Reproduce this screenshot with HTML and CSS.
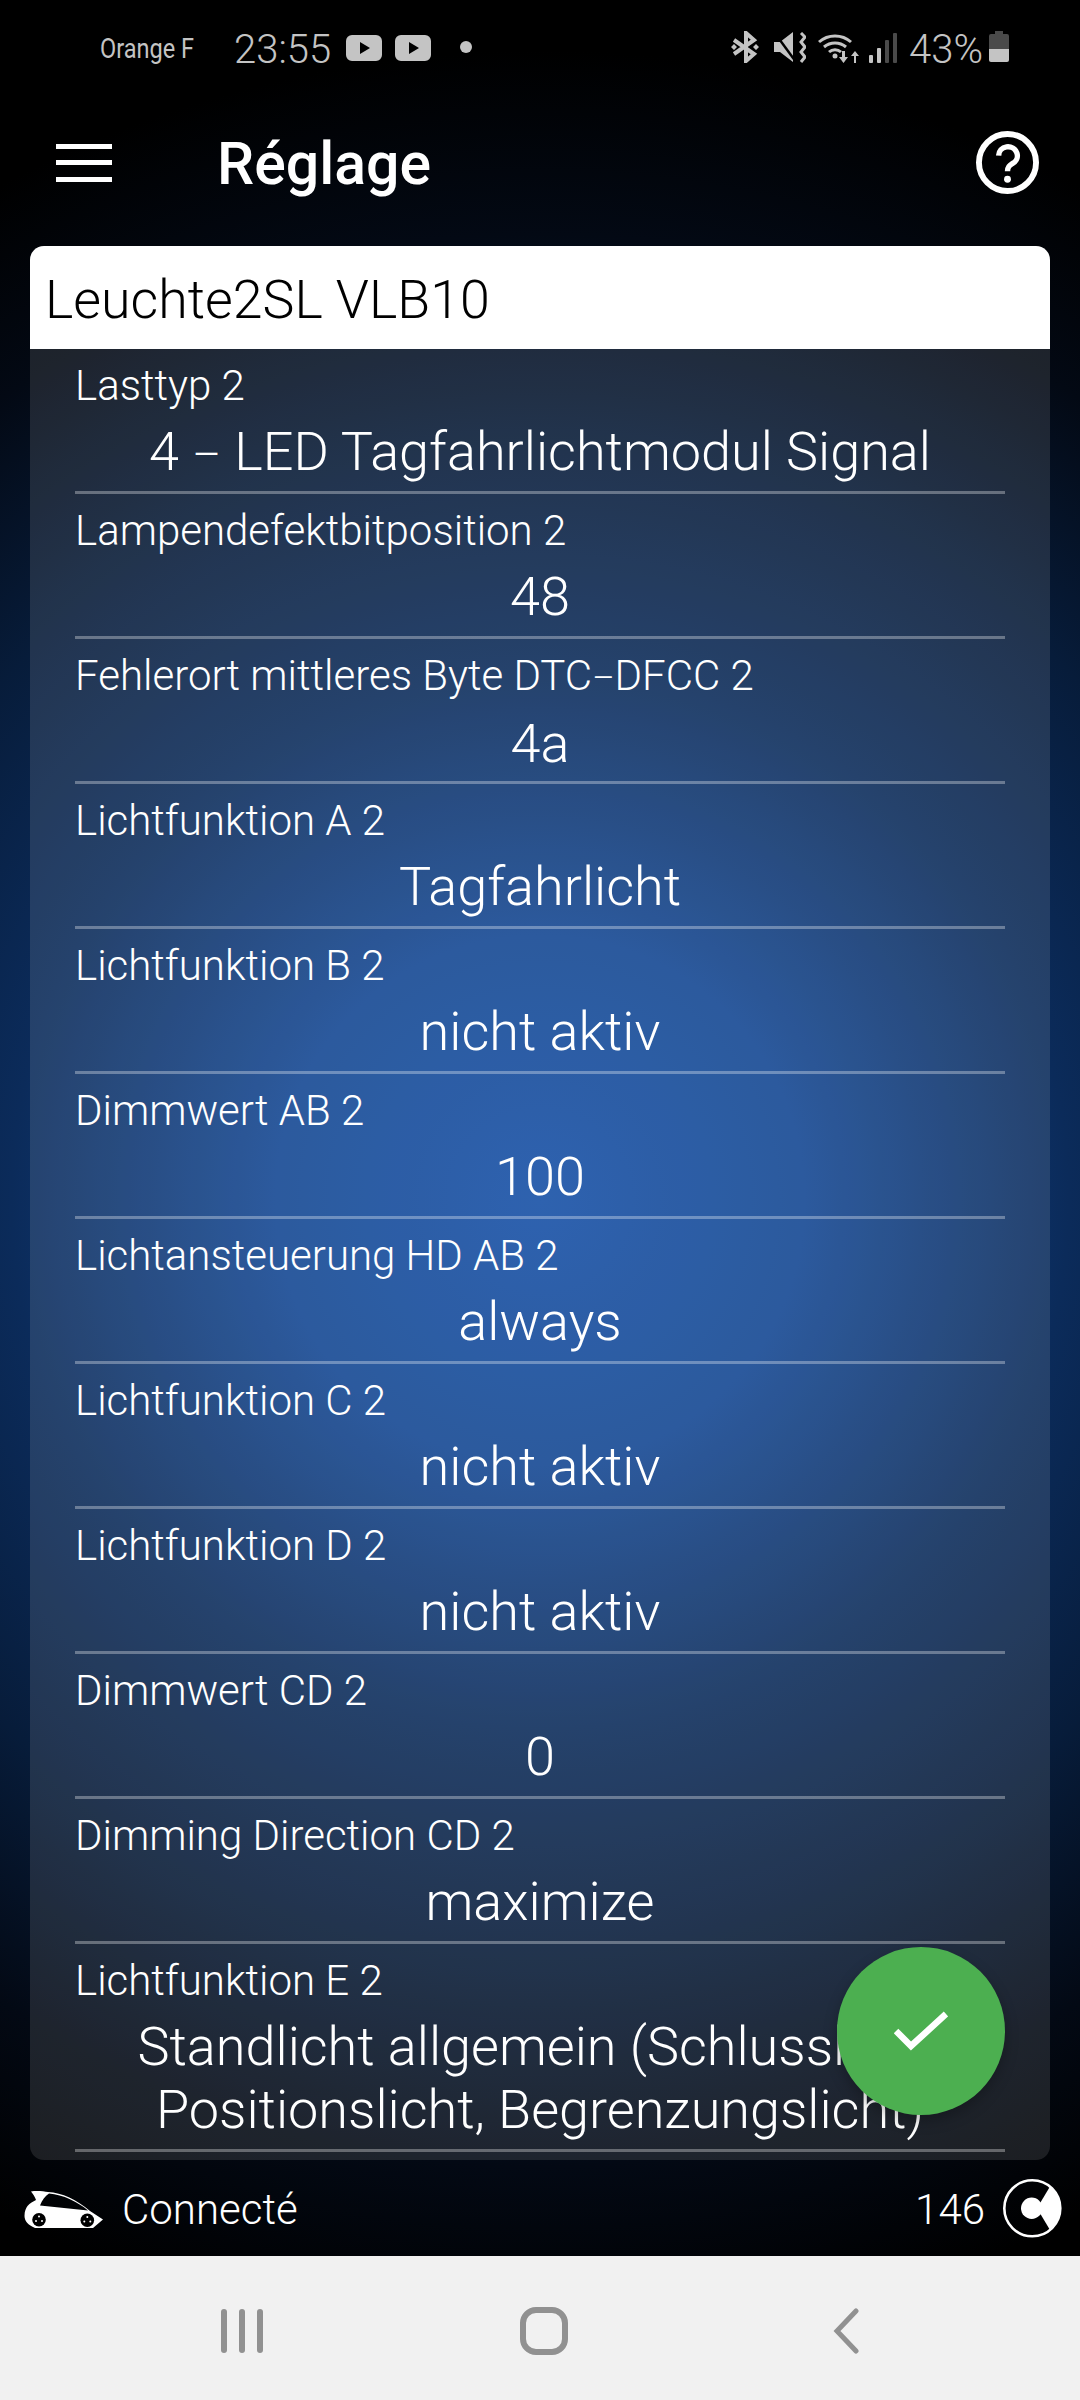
FILE: index.html
```html
<!DOCTYPE html>
<html lang="de">
<head>
<meta charset="utf-8">
<title>Réglage</title>
<link rel="stylesheet" href="styles.css">
</head>
<body>
<div class="screen">
  <div class="statusbar">
    <span class="carrier"><span class="carrier-text">Orange F</span></span>
    <span class="clock">23:55</span>
    <svg class="yt" viewBox="0 0 36 26"><path fill="#c4c4c4" fill-rule="evenodd" d="M6 0h24a6 6 0 0 1 6 6v14a6 6 0 0 1-6 6H6a6 6 0 0 1-6-6V6a6 6 0 0 1 6-6zM14 7v12l10-6z"/></svg>
    <svg class="yt" viewBox="0 0 36 26"><path fill="#c4c4c4" fill-rule="evenodd" d="M6 0h24a6 6 0 0 1 6 6v14a6 6 0 0 1-6 6H6a6 6 0 0 1-6-6V6a6 6 0 0 1 6-6zM14 7v12l10-6z"/></svg>
    <span class="dot"></span>
    <span class="spacer"></span>
    <svg class="ic-bt" viewBox="0 0 28 32"><path fill="none" stroke="#c4c4c4" stroke-width="4" d="M3 9l20 14-8 7V2l8 7L3 23"/><path fill="#c4c4c4" d="M0 16l3-3 3 3-3 3zM22 16l3-3 3 3-3 3z"/></svg>
    <svg class="ic-mute" viewBox="0 0 32 31"><path fill="#c4c4c4" d="M0 10h6L19 0v30L6 20H0z"/><path fill="none" stroke="#000" stroke-width="2.500" d="M0 0l22 30"/><path fill="none" stroke="#c4c4c4" stroke-width="3" d="M27 1l4 4-4 5 4 5-4 5 4 5-4 5"/></svg>
    <svg class="ic-wifi" viewBox="0 0 41 32"><g fill="none" stroke="#c4c4c4" stroke-width="3"><path d="M1 11a24 24 0 0 1 32 0"/><path d="M6 16a17 17 0 0 1 22 0"/><path d="M11 21a9 9 0 0 1 12 0"/></g><circle cx="17" cy="25" r="2.500" fill="#c4c4c4"/><path fill="#c4c4c4" d="M24 20h3v6h3l-4.500 6-4.500-6h3zM36 32v-7h-3l4-5 4 5h-3v7z"/></svg>
    <svg class="ic-signal" viewBox="0 0 28 30"><rect x="0" y="22" width="4" height="8" rx="1" fill="#c4c4c4"/><rect x="8" y="15" width="4" height="15" rx="1" fill="#c4c4c4"/><rect x="16" y="7" width="4" height="23" rx="1" fill="#4a4a4a"/><rect x="24" y="0" width="4" height="30" rx="1" fill="#4a4a4a"/></svg>
    <span class="battery-text">43%</span>
    <svg class="ic-batt" viewBox="0 0 20 31"><path fill="#4a4a4a" d="M6 0h8v3h4a2 2 0 0 1 2 2v13H0V5a2 2 0 0 1 2-2h4z"/><path fill="#c4c4c4" d="M0 18h20v11a2 2 0 0 1-2 2H2a2 2 0 0 1-2-2z"/></svg>
  </div>

  <header class="toolbar">
    <div class="burger"><span></span><span></span><span></span></div>
    <h1 class="title">Réglage</h1>
    <svg class="help" viewBox="0 0 64 64"><circle cx="32" cy="32" r="29" fill="none" stroke="#fff" stroke-width="6"/><path fill="none" stroke="#fff" stroke-width="5.500" d="M23 25a9.500 9 0 1 1 14 8c-3 2-5 3.500-5 8"/><circle cx="32" cy="49" r="3.500" fill="#fff"/></svg>
  </header>

  <main class="card">
    <div class="card-head">Leuchte2SL VLB10</div>
    <div class="rows">
      <div class="row"><div class="label">Lasttyp 2</div><div class="value">4 <span class="dash">–</span> LED Tagfahrlichtmodul Signal</div></div>
      <div class="row"><div class="label">Lampendefektbitposition 2</div><div class="value">48</div></div>
      <div class="row"><div class="label">Fehlerort mittleres Byte DTC<span class="dash">–</span>DFCC 2</div><div class="value">4a</div></div>
      <div class="row"><div class="label">Lichtfunktion A 2</div><div class="value">Tagfahrlicht</div></div>
      <div class="row"><div class="label">Lichtfunktion B 2</div><div class="value">nicht aktiv</div></div>
      <div class="row"><div class="label">Dimmwert AB 2</div><div class="value">100</div></div>
      <div class="row"><div class="label">Lichtansteuerung HD AB 2</div><div class="value">always</div></div>
      <div class="row"><div class="label">Lichtfunktion C 2</div><div class="value">nicht aktiv</div></div>
      <div class="row"><div class="label">Lichtfunktion D 2</div><div class="value">nicht aktiv</div></div>
      <div class="row"><div class="label">Dimmwert CD 2</div><div class="value">0</div></div>
      <div class="row"><div class="label">Dimming Direction CD 2</div><div class="value">maximize</div></div>
      <div class="row"><div class="label">Lichtfunktion E 2</div><div class="value">Standlicht allgemein (Schlusslicht, Positionslicht, Begrenzungslicht)</div></div>
    </div>
    <button class="fab" aria-label="OK"><svg viewBox="0 0 54 40"><path fill="none" stroke="#fff" stroke-width="6.500" d="M2 20l15 15L52 3"/></svg></button>
  </main>

  <footer class="connbar">
    <svg class="car" viewBox="0 0 100 60"><path fill="#fff" fill-rule="evenodd" d="M16 13.500C22 12.500 29 13.500 33 14 47 14.500 62 22 75 33L88 41.500 78 50H20C13 47 9.500 43 9.500 38 9.500 33 11 30 12.500 28 15 25 18 23.500 21 22 20 19 18 16 16 13.500zM25 27.500L73 32.500C63 24 48 16.500 34 15.500 30 18 27 22 25 27.500z"/><g fill="#000"><circle cx="24" cy="41.700" r="6.800"/><circle cx="72.300" cy="42.300" r="6.800"/></g><g fill="#fff"><circle cx="24" cy="38.500" r="1"/><circle cx="27" cy="43" r="1"/><circle cx="21" cy="43" r="1"/><circle cx="72.300" cy="39" r="1"/><circle cx="75.300" cy="43.500" r="1"/><circle cx="69.300" cy="43.500" r="1"/></g></svg>
    <span class="conn">Connecté</span>
    <span class="spacer"></span>
    <span class="count">146</span>
    <svg class="pie" viewBox="12 12 60 60"><circle cx="42.300" cy="42.300" r="28" fill="none" stroke="#fff" stroke-width="2.600"/><path fill="#fff" d="M47 42.300L60 20.500A28 28 0 0 1 60 64z"/><circle cx="41.700" cy="42.300" r="10.700" fill="#fff"/></svg>
  </footer>

  <nav class="navbar">
    <div class="recents"><span></span><span></span><span></span></div>
    <div class="home"></div>
    <svg class="back" viewBox="0 0 26 46"><path fill="none" stroke="#919191" stroke-width="5" stroke-linecap="round" d="M23 3L4 23l19 20"/></svg>
  </nav>
</div>
</body>
</html>
```

FILE: styles.css
```css
* { box-sizing: border-box; }
html, body { margin: 0; padding: 0; }
body { width: 1080px; height: 2400px; overflow: hidden; font-family: Roboto, "Liberation Sans", sans-serif; background: #000; }
.screen { width: 1080px; height: 2400px; display: flex; flex-direction: column;
  background: radial-gradient(circle 1150px at 540px 1200px, #154fa6 0%, #124692 23%, #0b2b5a 46%, #071c3a 65%, #030914 84%, #000 100%); }
.spacer { flex: 1; }

.statusbar { height: 64px; padding: 32px 71px 0 100px; display: flex; align-items: flex-start; color: #c4c4c4; }
.carrier { width: 134px; font-size: 28px; line-height: 34px; }
.carrier-text { display: inline-block; white-space: nowrap; transform: scaleX(.84); transform-origin: left center; }
.clock { font-size: 40px; font-weight: 300; line-height: 36px; width: 112px; }
.yt { width: 36px; height: 26px; margin: 3px 13px 0 0; }
.dot { width: 12px; height: 12px; border-radius: 50%; background: #c4c4c4; margin: 9px 0 0 16px; }
.ic-bt { width: 28px; height: 32px; margin-top: -1px; }
.ic-mute { width: 32px; height: 31px; margin: 0 0 0 15px; }
.ic-wifi { width: 41px; height: 32px; margin: -1px 0 0 12px; }
.ic-signal { width: 28px; height: 30px; margin: 1px 0 0 10px; }
.battery-text { font-size: 40px; font-weight: 300; line-height: 36px; margin-left: 12px; }
.ic-batt { width: 20px; height: 31px; margin: -1px 0 0 6px; }

.toolbar { height: 182px; padding: 15px 41px 0 56px; display: flex; align-items: center; }
.burger { width: 56px; height: 38px; display: flex; flex-direction: column; justify-content: space-between; }
.burger span { height: 5px; background: #fff; }
.title { flex: 1; margin: 3px 0 0 105px; font-size: 59px; font-weight: 500; color: #fff; line-height: 64px; }
.help { width: 63px; height: 63px; }

.card { position: relative; margin: 0 30px; height: 1914px; border-radius: 14px; background: rgba(255,255,255,.11); }
.card-head { height: 103px; padding: 5px 15px 0; background: #fff; color: #000; font-size: 53.700px; font-weight: 300; line-height: 98px; border-radius: 14px 14px 0 0; }
.rows { padding: 0 45px; }
.row { height: 145px; border-bottom: 3px solid rgba(255,255,255,.32); color: #fff; font-weight: 300; }
.row:last-child { height: 208px; }
.label { font-size: 42px; line-height: 46px; padding-top: 14px; box-sizing: content-box; }
.value { font-size: 54px; line-height: 63px; text-align: center; padding-top: 11px; }
.dash { font-size: .82em; }

.fab { position: absolute; left: 807px; top: 1701px; width: 168px; height: 168px; padding: 0; border: 0; border-radius: 50%; background: #4caf50; display: flex; align-items: center; justify-content: center; box-shadow: 0 6px 14px rgba(0,0,0,.25); }
.fab svg { width: 54px; height: 40px; }

.connbar { height: 96px; padding: 0 18px 0 15px; display: flex; align-items: center; color: #fff; }
.car { width: 100px; height: 60px; margin-right: 7px; }
.conn { font-size: 42px; font-weight: 300; padding-top: 3px; }
.count { font-size: 42px; font-weight: 300; margin-right: 17px; padding-top: 3px; }
.pie { width: 60px; height: 60px; }

.navbar { height: 144px; background: #f1f1f1; display: flex; align-items: center; padding: 6px 221px 0; }
.recents { width: 42px; height: 44px; display: flex; justify-content: space-between; }
.recents span { width: 6px; background: #919191; border-radius: 3px; }
.home { width: 48px; height: 48px; margin-left: 257px; border: 6px solid #919191; border-radius: 16px; }
.back { width: 26px; height: 46px; margin-left: 265px; }
```
